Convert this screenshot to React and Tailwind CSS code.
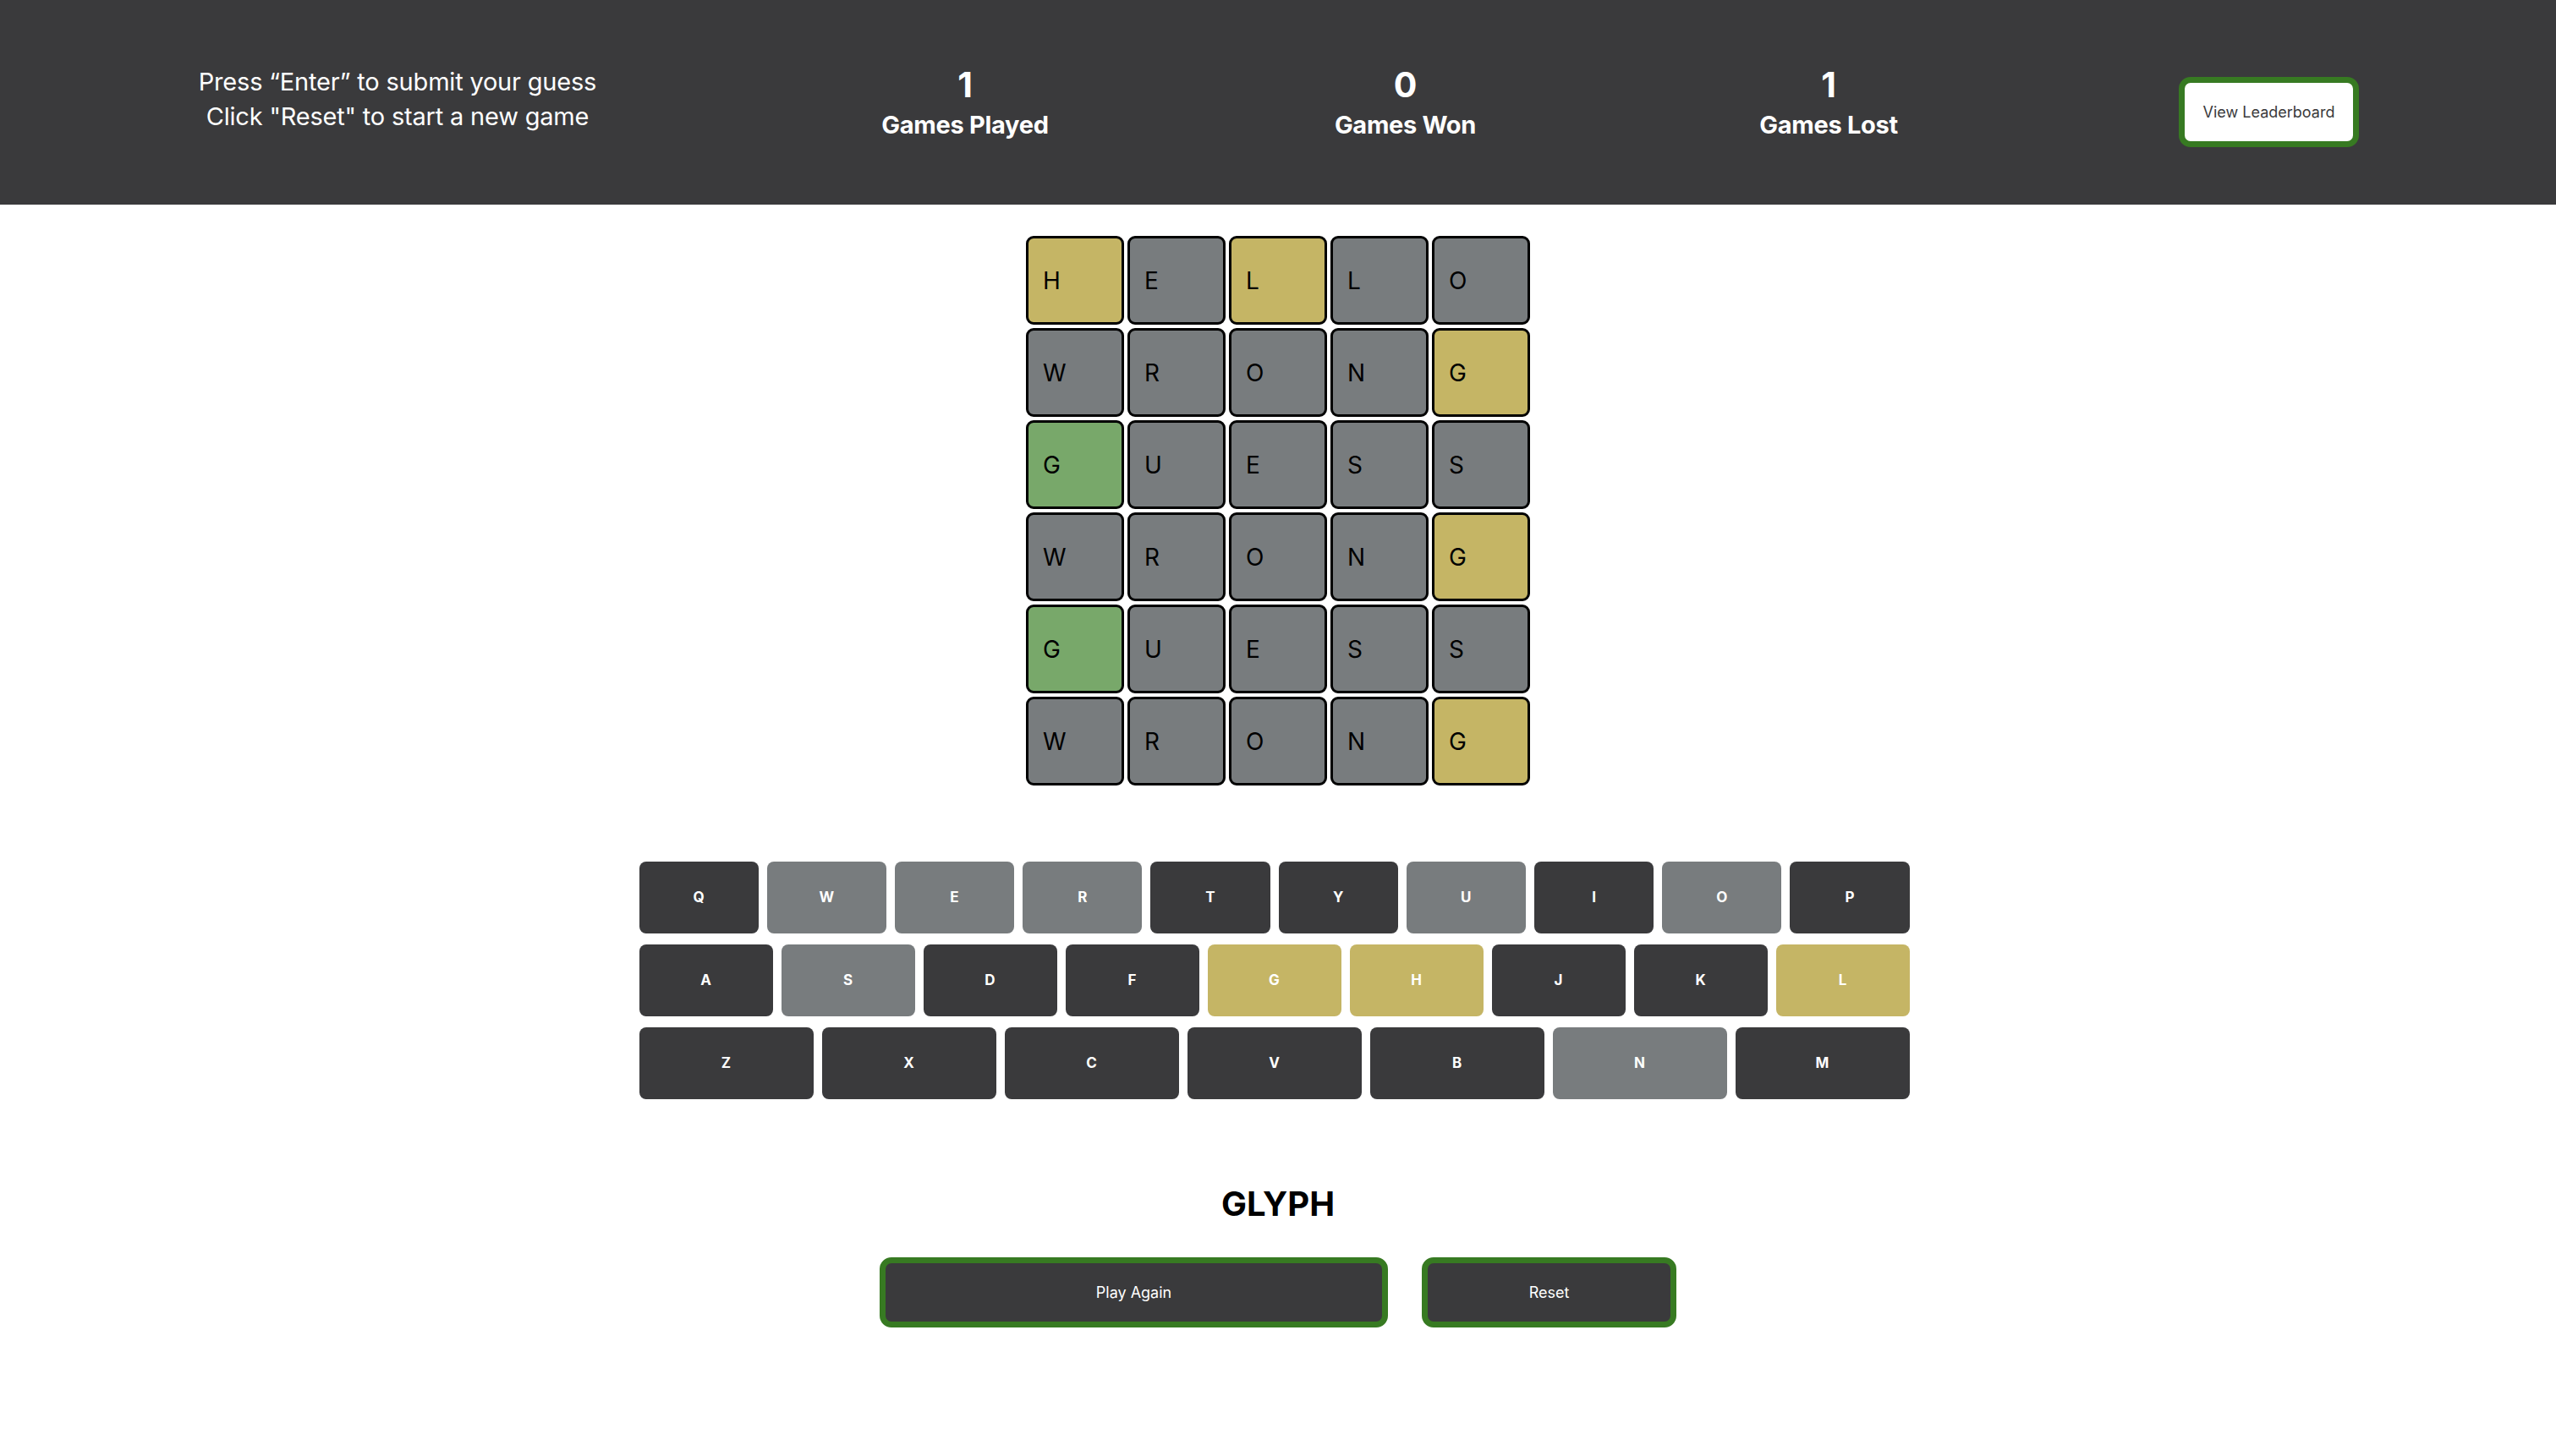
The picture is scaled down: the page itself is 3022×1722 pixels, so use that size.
import React from 'react';

const Y = 'bg-[#c5b565]';
const G = 'bg-[#787c7e]';
const GR = 'bg-[#78a86a]';
const D = 'bg-[#3a3a3c]';

const board = [
    [['H', Y], ['E', G], ['L', Y], ['L', G], ['O', G]],
    [['W', G], ['R', G], ['O', G], ['N', G], ['G', Y]],
    [['G', GR], ['U', G], ['E', G], ['S', G], ['S', G]],
    [['W', G], ['R', G], ['O', G], ['N', G], ['G', Y]],
    [['G', GR], ['U', G], ['E', G], ['S', G], ['S', G]],
    [['W', G], ['R', G], ['O', G], ['N', G], ['G', Y]],
];

const keyRows = [
    [['Q', D], ['W', G], ['E', G], ['R', G], ['T', D], ['Y', D], ['U', G], ['I', D], ['O', G], ['P', D]],
    [['A', D], ['S', G], ['D', D], ['F', D], ['G', Y], ['H', Y], ['J', D], ['K', D], ['L', Y]],
    [['Z', D], ['X', D], ['C', D], ['V', D], ['B', D], ['N', G], ['M', D]],
];

const stats = [
    { value: 1, label: 'Games Played', w: 'w-[206px]' },
    { value: 0, label: 'Games Won', w: 'w-[173px]' },
    { value: 1, label: 'Games Lost', w: 'w-[166px]' },
];

const App = () => {
    return (
        <div className="min-h-screen bg-white font-['Inter','Noto_Sans',sans-serif]">
            {/* Header */}
            <header className="h-[242px] bg-[#3a3a3c] flex items-center justify-between px-[233px] text-white">
                <div className="w-[474px] text-center text-[29px] leading-[41px] tracking-[-0.2px] -mt-[8px]">
                    <p className="whitespace-nowrap">Press “Enter” to submit your guess</p>
                    <p className="whitespace-nowrap">Click "Reset" to start a new game</p>
                </div>
                {stats.map((s, i) => (
                    <div key={i} className={`${s.w} flex flex-col items-center`}>
                        <span className="text-[41px] leading-[48px] font-bold">{s.value}</span>
                        <span className="text-[29px] leading-[36px] font-bold mt-[6px] whitespace-nowrap tracking-[-0.3px]">{s.label}</span>
                    </div>
                ))}
                <button className="w-[213px] h-[83px] mt-[22px] bg-white border-[7px] border-[#377a22] rounded-[14px] text-[18px] text-[#3a3a3c]">
                    View Leaderboard
                </button>
            </header>

            {/* Board */}
            <div className="flex justify-center mt-[37px]">
                <div className="flex flex-col gap-[4px]">
                    {board.map((row, r) => (
                        <div key={r} className="flex gap-[4px]">
                            {row.map(([letter, color], c) => (
                                <div
                                    key={c}
                                    className={`w-[116px] h-[105px] ${color} border-[3px] border-black rounded-[9px] flex items-center pl-[17px] text-[28px] text-black`}
                                >
                                    {letter}
                                </div>
                            ))}
                        </div>
                    ))}
                </div>
            </div>

            {/* Keyboard */}
            <div className="flex justify-center mt-[90px] pr-[9px]">
                <div className="w-[1502px] flex flex-col gap-[13px]">
                    {keyRows.map((row, r) => (
                        <div key={r} className="flex gap-[10px]">
                            {row.map(([k, color], i) => (
                                <div
                                    key={i}
                                    className={`flex-1 h-[85px] ${color} rounded-[8px] flex items-center justify-center text-white text-[17px] font-bold`}
                                >
                                    {k}
                                </div>
                            ))}
                        </div>
                    ))}
                </div>
            </div>

            {/* Answer + actions */}
            <h2 className="text-center text-[40px] font-bold text-black mt-[100px] leading-[48px]">GLYPH</h2>
            <div className="flex justify-center gap-[40px] mt-[39px]">
                <button className="w-[601px] h-[83px] bg-[#3a3a3c] border-[7px] border-[#377a22] rounded-[14px] text-white text-[18px]">
                    Play Again
                </button>
                <button className="w-[301px] h-[83px] bg-[#3a3a3c] border-[7px] border-[#377a22] rounded-[14px] text-white text-[18px]">
                    Reset
                </button>
            </div>
        </div>
    );
};

export default App;
